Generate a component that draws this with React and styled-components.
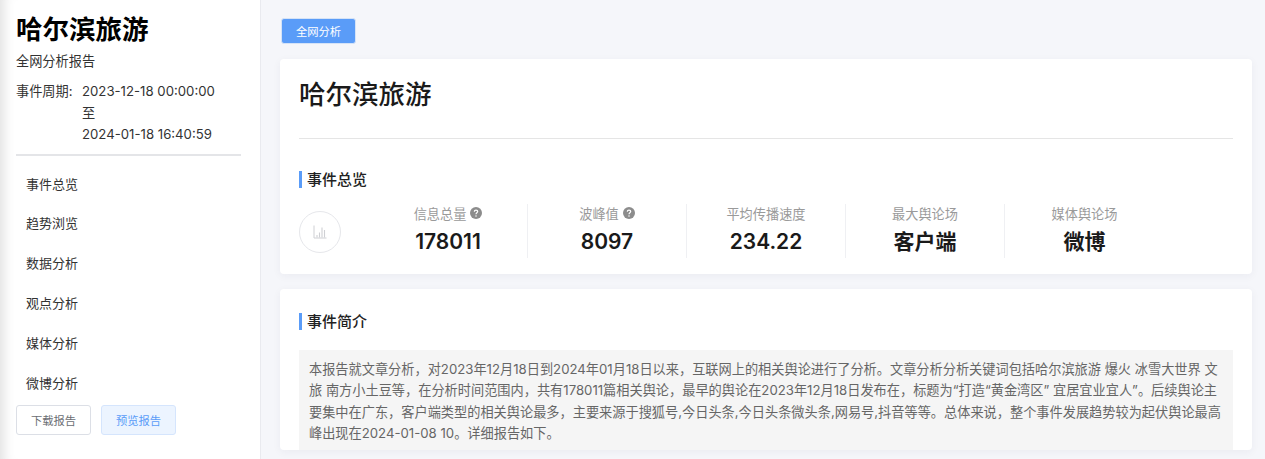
import React from "react";
import styled, { createGlobalStyle } from "styled-components";

const MENU = ["事件总览", "趋势浏览", "数据分析", "观点分析", "媒体分析", "微博分析"];

const STATS = [
  { label: "信息总量", value: "178011", help: true },
  { label: "波峰值", value: "8097", help: true },
  { label: "平均传播速度", value: "234.22" },
  { label: "最大舆论场", value: "客户端" },
  { label: "媒体舆论场", value: "微博" },
];

const SUMMARY =
  "本报告就文章分析，对2023年12月18日到2024年01月18日以来，互联网上的相关舆论进行了分析。文章分析分析关键词包括哈尔滨旅游 爆火 冰雪大世界 文旅 南方小土豆等，在分析时间范围内，共有178011篇相关舆论，最早的舆论在2023年12月18日发布在，标题为“打造“黄金湾区” 宜居宜业宜人”。后续舆论主要集中在广东，客户端类型的相关舆论最多，主要来源于搜狐号,今日头条,今日头条微头条,网易号,抖音等等。总体来说，整个事件发展趋势较为起伏舆论最高峰出现在2024-01-08 10。详细报告如下。";

const GlobalStyle = createGlobalStyle`
  html, body {
    margin: 0;
    height: 459px;
    overflow: hidden;
    background: #f5f6fa;
    font-family: Inter, "Noto Sans CJK SC", sans-serif;
  }
  * {
    box-sizing: border-box;
  }
`;

const Page = styled.div`
  display: flex;
  height: 459px;
  overflow: hidden;
`;

const Sidebar = styled.aside`
  flex: 0 0 261px;
  display: flex;
  flex-direction: column;
  height: 459px;
  padding: 11px 19px 0 16px;
  background: #fff;
  border-right: 1px solid #e9eaef;
  box-shadow: inset 14px 0 12px -10px rgba(0, 0, 0, 0.12);
`;

const BigTitle = styled.h1`
  margin: 0;
  font-size: 26.5px;
  line-height: 36px;
  font-weight: 600;
  color: #000;
`;

const SubTitle = styled.div`
  margin-top: 4px;
  font-size: 13.2px;
  line-height: 20px;
  color: #333;
`;

const Period = styled.div`
  display: flex;
  margin-top: 10px;
  font-size: 13.2px;
  line-height: 21.5px;
  color: #333;
`;

const PeriodLabel = styled.div`
  flex: 0 0 66px;
`;

const SideDivider = styled.hr`
  width: 225px;
  margin: 8px 0 0;
  border: 0;
  border-top: 2px solid #e4e5e8;
`;

const Menu = styled.nav`
  display: flex;
  flex-direction: column;
  margin-top: 9px;
`;

const MenuItem = styled.a`
  height: 39.9px;
  padding-left: 10px;
  font-size: 13px;
  line-height: 39.9px;
  color: #333;
`;

const ButtonRow = styled.div`
  display: flex;
  gap: 10px;
  margin-top: 1.4px;
`;

const SideButton = styled.button`
  width: 75px;
  height: 30px;
  padding: 0;
  border: 1px solid ${({ $primary }) => ($primary ? "#d5e5fd" : "#dcdfe6")};
  border-radius: 3px;
  background: ${({ $primary }) => ($primary ? "#ecf4ff" : "#fff")};
  color: ${({ $primary }) => ($primary ? "#5a9cf8" : "#6b6e73")};
  font-family: inherit;
  font-size: 11.3px;
`;

const Main = styled.main`
  flex: 1;
  min-width: 0;
  padding: 18px 13px 0 19px;
`;

const Tag = styled.div`
  display: flex;
  align-items: center;
  justify-content: center;
  width: 75px;
  height: 26px;
  margin-left: 1px;
  border: 1px solid #d5e3f7;
  border-radius: 3px;
  background: #5a9cf8;
  color: #fff;
  font-size: 11.3px;
`;

const Card = styled.section`
  margin-top: 15px;
  padding: ${({ $first }) => ($first ? "16px 19px 15px" : "21px 19px 0")};
  height: ${({ $first }) => ($first ? "215px" : "auto")};
  background: #fff;
  border-radius: 4px;
  box-shadow: 0 2px 8px rgba(30, 40, 80, 0.05);
`;

const CardTitle = styled.h2`
  margin: 0;
  font-size: 26.5px;
  line-height: 38px;
  font-weight: 500;
  color: #1a1a1a;
`;

const CardDivider = styled.hr`
  margin: 25px 0 0;
  border: 0;
  border-top: 1px solid #e5e5e5;
`;

const SectionTitle = styled.h3`
  display: flex;
  align-items: center;
  height: 17px;
  margin: ${({ $top }) => $top} 0 0;
  padding-left: 5px;
  border-left: 3px solid #5a9cf8;
  font-size: 15px;
  line-height: 17px;
  font-weight: 500;
  color: #222;
`;

const StatRow = styled.div`
  display: flex;
  align-items: center;
  height: 54px;
  margin-top: 16px;
`;

const ChartBadge = styled.div`
  display: flex;
  align-items: center;
  justify-content: center;
  flex: 0 0 42px;
  height: 42px;
  margin: 2px 28px 0 0;
  border: 1px solid #e6e7eb;
  border-radius: 50%;
`;

const Stat = styled.div`
  display: flex;
  flex-direction: column;
  align-items: center;
  flex: 0 0 159px;
  height: 54px;
  border-right: ${({ $last }) => ($last ? "0" : "1px solid #eff0f3")};
`;

const StatLabel = styled.div`
  display: flex;
  align-items: center;
  gap: 4px;
  height: 18px;
  font-size: 13.2px;
  color: #9a9a9a;
`;

const StatValue = styled.div`
  margin-top: 6px;
  font-size: 21px;
  line-height: 28px;
  font-weight: 600;
  color: #1a1a1a;
`;

const Summary = styled.p`
  margin: 20px 0 0;
  padding: 9px 10px 0;
  height: 100px;
  background: #f5f5f5;
  font-size: 13.2px;
  line-height: 21.4px;
  color: #666;
`;

const HelpIcon = () => (
  <svg width="12" height="12" viewBox="0 0 12 12">
    <circle cx="6" cy="6" r="6" fill="#8c8c8c" />
    <path
      d="M4.3 4.7c0-1 .8-1.6 1.7-1.6s1.7.6 1.7 1.5c0 1.2-1.7 1.3-1.7 2.6"
      fill="none"
      stroke="#fff"
      strokeWidth="1.2"
    />
    <circle cx="6" cy="8.9" r=".75" fill="#fff" />
  </svg>
);

const ChartIcon = () => (
  <svg width="14" height="14" viewBox="0 0 14 14" fill="none" stroke="#cfd0d4">
    <path d="M1 .5V13h12.5" strokeWidth="1" />
    <path d="M4 10v2.5M6.5 7.5v5M9 2.5v10M11.5 5v7.5" strokeWidth="1.1" />
  </svg>
);

export default function App() {
  return (
    <Page>
      <GlobalStyle />
      <Sidebar>
        <BigTitle>哈尔滨旅游</BigTitle>
        <SubTitle>全网分析报告</SubTitle>
        <Period>
          <PeriodLabel>事件周期:</PeriodLabel>
          <div>
            2023-12-18 00:00:00
            <br />至<br />
            2024-01-18 16:40:59
          </div>
        </Period>
        <SideDivider />
        <Menu>
          {MENU.map((item) => (
            <MenuItem key={item}>{item}</MenuItem>
          ))}
        </Menu>
        <ButtonRow>
          <SideButton>下载报告</SideButton>
          <SideButton $primary>预览报告</SideButton>
        </ButtonRow>
      </Sidebar>
      <Main>
        <Tag>全网分析</Tag>
        <Card $first>
          <CardTitle>哈尔滨旅游</CardTitle>
          <CardDivider />
          <SectionTitle $top="32px">事件总览</SectionTitle>
          <StatRow>
            <ChartBadge>
              <ChartIcon />
            </ChartBadge>
            {STATS.map((stat, i) => (
              <Stat key={stat.label} $last={i === STATS.length - 1}>
                <StatLabel>
                  {stat.label}
                  {stat.help && <HelpIcon />}
                </StatLabel>
                <StatValue>{stat.value}</StatValue>
              </Stat>
            ))}
          </StatRow>
        </Card>
        <Card>
          <SectionTitle $top="3px">事件简介</SectionTitle>
          <Summary>{SUMMARY}</Summary>
        </Card>
      </Main>
    </Page>
  );
}
